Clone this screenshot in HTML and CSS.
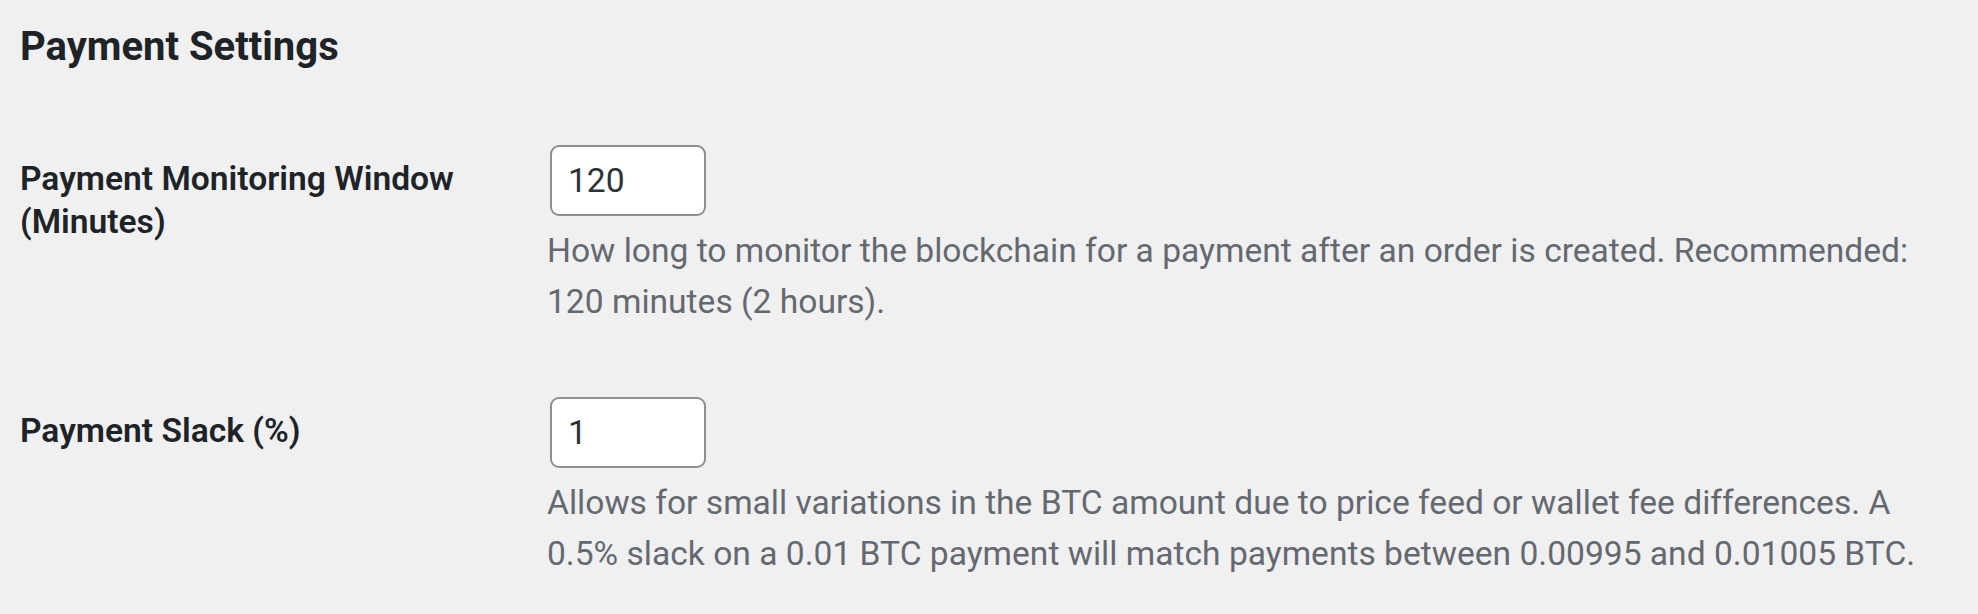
FILE: index.html
```html
<!DOCTYPE html>
<html lang="en">
<head>
<meta charset="utf-8">
<title>Payment Settings</title>
<link rel="stylesheet" href="styles.css">
</head>
<body>
<div class="wrap">
  <h2 class="section-title">Payment Settings</h2>
  <div class="form-table">
    <div class="row">
      <div class="label"><label for="window">Payment Monitoring Window (Minutes)</label></div>
      <div class="field">
        <input id="window" class="small-input" type="text" value="120">
        <p class="description">How long to monitor the blockchain for a payment after an order is created. Recommended: 120 minutes (2 hours).</p>
      </div>
    </div>
    <div class="row">
      <div class="label"><label for="slack">Payment Slack (%)</label></div>
      <div class="field">
        <input id="slack" class="small-input" type="text" value="1">
        <p class="description">Allows for small variations in the BTC amount due to price feed or wallet fee differences. A 0.5% slack on a 0.01 BTC payment will match payments between 0.00995 and 0.01005 BTC.</p>
      </div>
    </div>
  </div>
</div>
</body>
</html>
```

FILE: styles.css
```css
html, body {
  margin: 0;
  padding: 0;
  background: #f0f0f1;
}
body {
  font-family: Roboto, "Liberation Sans", sans-serif;
  color: #1d2327;
}
.wrap {
  padding: 21px 20px 0 20px;
}
.section-title {
  font-size: 40px;
  line-height: 52px;
  font-weight: 700;
  margin: 0 0 37px 0;
  color: #1d2327;
}
.form-table {
  display: flex;
  flex-direction: column;
}
.row {
  display: grid;
  grid-template-columns: 503px 1fr;
}
.label {
  padding: 47px 24px 47px 0;
  font-size: 33.6px;
  line-height: 43px;
  font-weight: 600;
  color: #1d2327;
}
.field {
  padding: 35px 0 35px 24px;
}
.small-input {
  display: block;
  box-sizing: border-box;
  width: 156px;
  height: 71px;
  margin: 0 0 0 3px;
  padding: 0 16px;
  border: 2px solid #8c8f94;
  border-radius: 9px;
  background: #fff;
  font-family: Roboto, "Liberation Sans", sans-serif;
  font-size: 33.6px;
  color: #2c3338;
  outline: none;
}
.description {
  margin: 9px 0 0 0;
  font-size: 33.6px;
  line-height: 51px;
  color: #646970;
}
```
